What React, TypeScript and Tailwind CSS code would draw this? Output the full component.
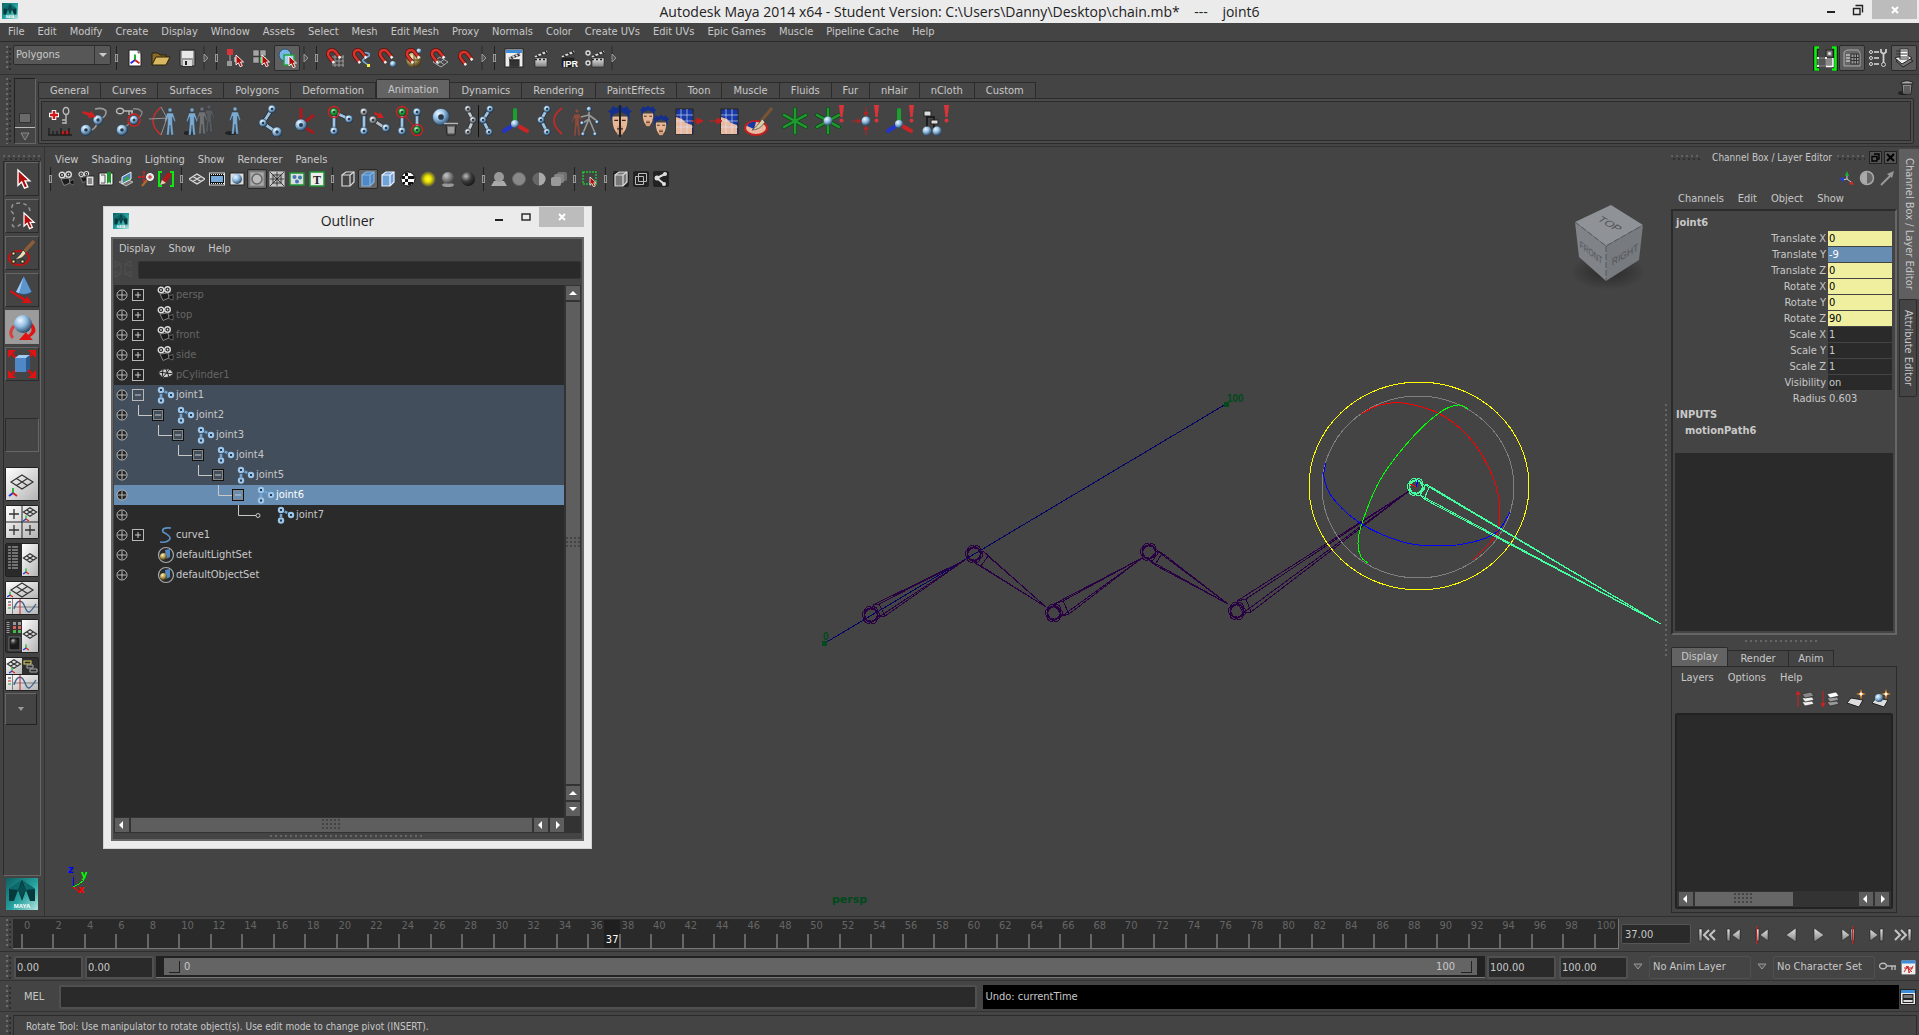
import React from "react";

/* ---------- shared drawing helpers ---------- */

interface ArtProps {
  w?: number;
  h?: number;
  children?: React.ReactNode;
}

const Art: React.FC<ArtProps> = ({ w = 20, h = w, children }) => (
  <svg width={w} height={h} viewBox={`0 0 ${w} ${h}`} className="block shrink-0" aria-hidden="true">
    {children}
  </svg>
);

const Defs = () => (
  <svg width="0" height="0" className="absolute" aria-hidden="true">
    <defs>
      <radialGradient id="ball" cx="35%" cy="30%" r="75%">
        <stop offset="0" stopColor="#eef8ff" />
        <stop offset="0.45" stopColor="#93bfe4" />
        <stop offset="1" stopColor="#23405e" />
      </radialGradient>
      <radialGradient id="grayBall" cx="35%" cy="30%" r="75%">
        <stop offset="0" stopColor="#ffffff" />
        <stop offset="0.5" stopColor="#9a9a9a" />
        <stop offset="1" stopColor="#3a3a3a" />
      </radialGradient>
      <radialGradient id="darkBall" cx="35%" cy="30%" r="75%">
        <stop offset="0" stopColor="#bbbbbb" />
        <stop offset="0.5" stopColor="#3c3c3c" />
        <stop offset="1" stopColor="#151515" />
      </radialGradient>
      <radialGradient id="greenBall" cx="40%" cy="35%" r="70%">
        <stop offset="0" stopColor="#ffffff" />
        <stop offset="0.4" stopColor="#27b43a" />
        <stop offset="1" stopColor="#0b5a17" />
      </radialGradient>
      <radialGradient id="goldBall" cx="35%" cy="30%" r="75%">
        <stop offset="0" stopColor="#fff3c0" />
        <stop offset="0.5" stopColor="#b39a50" />
        <stop offset="1" stopColor="#3a3014" />
      </radialGradient>
      <radialGradient id="glow">
        <stop offset="0" stopColor="#ffff30" />
        <stop offset="0.4" stopColor="#e8e000" />
        <stop offset="1" stopColor="#e8e000" stopOpacity="0" />
      </radialGradient>
      <radialGradient id="cubeShade">
        <stop offset="0" stopColor="#2a2a2a" />
        <stop offset="1" stopColor="#2a2a2a" stopOpacity="0" />
      </radialGradient>
      <linearGradient id="teal" x1="0" y1="0" x2="1" y2="1">
        <stop offset="0" stopColor="#0d5f63" />
        <stop offset="0.55" stopColor="#27a39f" />
        <stop offset="1" stopColor="#b4e6e2" />
      </linearGradient>
      <linearGradient id="tile" x1="0" y1="0" x2="1" y2="1">
        <stop offset="0" stopColor="#ffffff" />
        <stop offset="1" stopColor="#b4b4b4" />
      </linearGradient>
      <linearGradient id="steel" x1="0" y1="0" x2="0" y2="1">
        <stop offset="0" stopColor="#e6e6e6" />
        <stop offset="1" stopColor="#7f7f7f" />
      </linearGradient>
    </defs>
  </svg>
);

const Ball = ({ x, y, r = 4, f = "ball" }: { x: number; y: number; r?: number; f?: string }) => (
  <g>
    <circle cx={x} cy={y} r={r} fill={`url(#${f})`} stroke="#1f2f3f" strokeWidth="0.5" />
    {r >= 3 && <circle cx={x} cy={y} r={r / 3} fill="#26384a" />}
  </g>
);

const Link = ({ d, c = "#9fc4e2" }: { d: string; c?: string }) => (
  <g fill="none">
    <path d={d} stroke="#22303d" strokeWidth="4.4" />
    <path d={d} stroke={c} strokeWidth="2.8" />
  </g>
);

const Cursor = ({ x, y, s = 1 }: { x: number; y: number; s?: number }) => (
  <path
    transform={`translate(${x} ${y}) scale(${s})`}
    d="M0 0V11L2.6 8.6L4.6 13L7 12L5 7.8H8.4Z"
    fill="#b00d0d"
    stroke="#fff"
    strokeWidth="1"
  />
);

const Man = ({ x = 16, y = 0, c = "#7ba9d0" }: { x?: number; y?: number; c?: string }) => (
  <g transform={`translate(${x} ${y})`} fill={c} stroke="#2b3a49" strokeWidth="0.4">
    <circle cx="0" cy="4" r="2" />
    <path d="M-3 7H3L5.6 15L4.6 16L2.4 11V17L3.4 29H1L0 19L-1 29H-3.4L-2.4 17V11L-4.6 16L-5.6 15Z" />
  </g>
);

const Bang = () => (
  <g fill="#d9343a">
    <path d="M25 0H30L28.6 12H26.4Z" />
    <circle cx="27.5" cy="15.5" r="2" />
  </g>
);

const Face = ({ x, y, s = 1 }: { x: number; y: number; s?: number }) => (
  <g transform={`translate(${x} ${y}) scale(${s})`}>
    <path d="M-8 10Q-8 27 0 29Q8 27 8 10Z" fill="#e8b795" />
    <path d="M-3 20H3V29H-3Z" fill="#d79c78" />
    <path d="M-10 15L-10 6L-13 5L-9 2L-8-1L-4 1L0-2L4 1L8-1L9 2L13 5L10 6V15L7 8L0 5L-7 8Z" fill="#14308c" />
    <path d="M-6 14H-2M2 14H6M-3 23H3" stroke="#3a2418" strokeWidth="1.4" />
  </g>
);

const MeshFace = ({ x }: { x: number }) => (
  <g>
    <rect x={x} y="4" width="17" height="25" fill="#1839a5" stroke="#222" />
    <path d={`M${x} 12L${x + 6} 14L${x + 10} 18L${x + 16} 20V29H${x}Z`} fill="#e9b9a0" />
    <path
      d={`M${x} 10H${x + 17}M${x} 16H${x + 17}M${x} 22H${x + 17}M${x + 5} 4V29M${x + 11} 4V29`}
      stroke="#dfe6ff"
      strokeWidth="0.6"
    />
  </g>
);

const Key = ({ x, y, v = false }: { x: number; y: number; v?: boolean }) => (
  <g transform={`translate(${x} ${y}) rotate(${v ? 90 : 0})`} fill="none" stroke="#b9b9b9" strokeWidth="1.4">
    <ellipse cx="4" cy="0" rx="3.5" ry="2.8" />
    <path d="M8 0H17M13 0V4M16 0V4" />
  </g>
);

const Axis = ({ x, y, r = 1 }: { x: number; y: number; r?: number }) => (
  <g strokeWidth={1.8 * r} fill="none" transform={`translate(${x} ${y})`}>
    <path d={`M0 0V${-5 * r}`} stroke="#19b52b" />
    <path d={`M0 0L${-4 * r} ${3 * r}`} stroke="#2034d8" />
    <path d={`M0 0L${4 * r} ${3 * r}`} stroke="#d62020" />
  </g>
);

const Magnet = ({ x = 0, y = 0 }: { x?: number; y?: number }) => (
  <g transform={`translate(${x} ${y}) rotate(-38 7 6)`} fill="none">
    <path d="M3 13V6A4 4 0 0 1 11 6V13" stroke="#5a1010" strokeWidth="4" />
    <path d="M3 13V6A4 4 0 0 1 11 6V13" stroke="#d8342a" strokeWidth="2.6" />
    <path d="M3 12V14.500M11 12V14.500" stroke="#eee" strokeWidth="2.6" />
  </g>
);

const Clap = ({ x = 2, y = 2, c = "url(#steel)" }: { x?: number; y?: number; c?: string }) => (
  <g transform={`translate(${x} ${y})`}>
    <path d="M1 6L14 0L15 3L2 8Z" fill="#ddd" stroke="#222" strokeWidth="0.6" />
    <path d="M4 5L6 7M8 3L10 5M12 1L14 4" stroke="#222" strokeWidth="1.6" />
    <rect x="2" y="8" width="12" height="9" fill={c} stroke="#222" strokeWidth="0.6" />
    <path d="M2 9.500H14" stroke="#222" strokeWidth="1.6" strokeDasharray="2 2" />
  </g>
);

const MayaLogo = ({ s }: { s: number }) => (
  <svg width={s} height={s} viewBox="0 0 32 32" className="block shrink-0" aria-hidden="true">
    <rect width="32" height="32" fill="url(#teal)" />
    <path d="M3 23V11L16 2L29 11V23H24L20 12L16 23L12 12L8 23Z" fill="#06393c" />
    <path d="M16 2L29 11L20 12ZM16 2L3 11L12 12Z" fill="#0d6a6c" />
    <path d="M16 5L20 12L16 19L12 12Z" fill="#0a4d50" />
    <text x="16" y="30" textAnchor="middle" fontSize="6" fontWeight="bold" fill="#fff" fontFamily="Liberation Sans, sans-serif">
      MAYA
    </text>
  </svg>
);

const Grip = ({ vertical = true }: { vertical?: boolean }) => (
  <div
    className={
      vertical
        ? "w-1.5 self-stretch shrink-0 bg-[radial-gradient(circle_at_1px_1px,#6c6c6c_1px,transparent_1px),radial-gradient(circle_at_4px_3px,#2c2c2c_1px,transparent_1px)] bg-[length:6px_5px]"
        : "h-1.5 w-full bg-[radial-gradient(circle_at_1px_1px,#606060_1px,transparent_1px),radial-gradient(circle_at_3px_4px,#303030_1px,transparent_1px)] bg-[length:5px_6px]"
    }
  />
);

const Sep = () => (
  <div className="flex justify-center w-[11px] shrink-0">
    <Art w={5} h={24}>
      <path d="M2.5 0V9M2.5 15V24" stroke="#222" strokeWidth="1" />
      <rect x="1.5" y="8.5" width="2" height="7" fill="#444" stroke="#999" />
    </Art>
  </div>
);

const Tri = () => (
  <div className="flex justify-center w-[11px] shrink-0">
    <Art w={6} h={24}>
      <path d="M1 0V24" stroke="#2a2a2a" />
      <path d="M1 8L5 12L1 16Z" fill="#555" stroke="#999" />
    </Art>
  </div>
);

/* ---------- menus ---------- */

const mainMenu = [
  "File", "Edit", "Modify", "Create", "Display", "Window", "Assets", "Select", "Mesh", "Edit Mesh",
  "Proxy", "Normals", "Color", "Create UVs", "Edit UVs", "Epic Games", "Muscle", "Pipeline Cache", "Help",
];

const MenuItems = ({ items, className }: { items: string[]; className: string }) => (
  <nav className={`flex items-center whitespace-nowrap ${className}`}>
    {items.map((item) => (
      <button key={item} type="button">
        {item}
      </button>
    ))}
  </nav>
);

const TitleBar = () => (
  <header className="relative flex h-[23px] shrink-0 items-start bg-[#ebebeb] text-[#222]">
    <div className="pl-0.5 pt-[3px]">
      <MayaLogo s={16} />
    </div>
    <h1 className="flex-1 whitespace-pre pr-[18px] text-center font-['Open_Sans',sans-serif] text-[14px] leading-[23px]">
      Autodesk Maya 2014 x64 - Student Version: C:\Users\Danny\Desktop\chain.mb*{"    "}---{"    "}joint6
    </h1>
    <div className="absolute right-0.5 top-0 flex h-[19px] items-center">
      <button type="button" aria-label="Minimize" className="flex w-[26px] justify-center">
        <Art w={10}>
          <path d="M1 7H9" stroke="#222" strokeWidth="2" />
        </Art>
      </button>
      <button type="button" aria-label="Restore" className="flex w-[28px] justify-center">
        <Art w={12}>
          <path d="M3.5 1.5H10.5V8.5M1 4.5H8V10.5H1.5V4" stroke="#222" strokeWidth="1.4" fill="none" />
        </Art>
      </button>
      <button type="button" aria-label="Close" className="flex h-[19px] w-[45px] items-center justify-center bg-[#bcbcbc]">
        <Art w={8}>
          <path d="M1 1L7 7M7 1L1 7" stroke="#fff" strokeWidth="2" />
        </Art>
      </button>
    </div>
  </header>
);

/* ---------- status line ---------- */

interface Tool {
  name: string;
  art: React.ReactNode;
  on?: boolean;
}

const fileTools: Tool[] = [
  {
    name: "New scene",
    art: (
      <Art>
        <path d="M4 2H13L16 5V18H4Z" fill="#fff" stroke="#222" />
        <path d="M13 2V5H16" fill="#bbb" stroke="#222" strokeWidth="0.6" />
        <Axis x={10} y={12} r={1.1} />
      </Art>
    ),
  },
  {
    name: "Open scene",
    art: (
      <Art>
        <path d="M1 17V5H7L9 7H15V10" fill="#8a6a28" stroke="#2a2108" />
        <path d="M1 17L5 9H19L15 17Z" fill="#d8b860" stroke="#2a2108" />
      </Art>
    ),
  },
  {
    name: "Save scene",
    art: (
      <Art>
        <rect x="3" y="2" width="15" height="16" rx="1" fill="#9a9a9a" stroke="#222" />
        <rect x="5" y="3" width="11" height="7" fill="#e8e8e8" />
        <rect x="6" y="12" width="9" height="6" fill="#ddd" />
        <rect x="8" y="13" width="2" height="4" fill="#222" />
      </Art>
    ),
  },
];

const selectTools: Tool[] = [
  {
    name: "Select by hierarchy",
    art: (
      <Art>
        <rect x="2" y="1" width="6" height="6" fill="#d8343a" />
        <path d="M5 7V15" stroke="#aaa" />
        <rect x="2" y="13" width="5" height="5" fill="#999" />
        <rect x="9" y="9" width="5" height="5" fill="#999" />
        <Cursor x={11} y={7} s={0.9} />
      </Art>
    ),
  },
  {
    name: "Select by object",
    art: (
      <Art>
        <path d="M2 2H8V8H2ZM9 2H15V8H9ZM2 9H8V15H2Z" fill="#a5a5a5" stroke="#333" strokeWidth="0.5" />
        <rect x="9" y="9" width="6" height="6" fill="#3ec44e" />
        <Cursor x={11} y={7} s={0.9} />
      </Art>
    ),
  },
  {
    name: "Select by component",
    on: true,
    art: (
      <Art>
        <circle cx="8" cy="7" r="6" fill="#79b6e8" stroke="#28506e" />
        <rect x="7" y="7" width="10" height="10" fill="#a5d4f7" stroke="#19a52b" strokeWidth="1.4" />
        <Cursor x={12} y={8} s={0.9} />
      </Art>
    ),
  },
];

const snapTools: Tool[] = [
  {
    name: "Snap to grids",
    art: (
      <Art>
        <path d="M7 9H19M7 13H19M7 17H19M10 7V19M14 7V19M18 7V19" stroke="#999" />
        <Magnet />
      </Art>
    ),
  },
  {
    name: "Snap to curves",
    art: (
      <Art>
        <path d="M11 5Q20 4 18 8Q9 12 13 14L17 17" fill="none" stroke="#7ab0dd" strokeWidth="1.5" />
        <rect x="16" y="16" width="3" height="3" fill="#ffef40" />
        <Magnet />
      </Art>
    ),
  },
  {
    name: "Snap to points",
    art: (
      <Art>
        <circle cx="16" cy="16" r="3" fill="url(#ball)" />
        <Magnet />
      </Art>
    ),
  },
  {
    name: "Snap to projected center",
    art: (
      <Art>
        <circle cx="11" cy="12" r="7.5" fill="url(#goldBall)" />
        <path d="M4 12H18M11 5V19" stroke="#333" strokeWidth="0.7" />
        <circle cx="16" cy="3" r="2.5" fill="url(#ball)" />
        <Magnet x={1} />
      </Art>
    ),
  },
  {
    name: "Snap to view planes",
    art: (
      <Art>
        <path d="M4 14L11 9L19 14L12 19ZM8 11.5L15 16.5M8 16.5L15 11.5" fill="none" stroke="#aaa" />
        <Magnet />
      </Art>
    ),
  },
  {
    name: "Make live",
    art: (
      <Art>
        <Magnet x={2} y={2} />
      </Art>
    ),
  },
];

const renderTools: Tool[] = [
  {
    name: "Render view",
    art: (
      <Art>
        <rect x="1" y="1" width="18" height="18" fill="#eee" stroke="#222" />
        <rect x="2" y="2" width="16" height="3" fill="#3c8cd8" />
        <g transform="translate(4 5) scale(0.8)">
          <Clap x={0} y={0} c="#333" />
        </g>
      </Art>
    ),
  },
  {
    name: "Render frame",
    art: (
      <Art>
        <Clap />
      </Art>
    ),
  },
  {
    name: "IPR render",
    art: (
      <Art>
        <Clap c="#222" />
        <text x="5" y="19" fontSize="9" fontWeight="bold" fill="#fff" fontFamily="Liberation Sans, sans-serif">
          IPR
        </text>
      </Art>
    ),
  },
  {
    name: "Render settings",
    art: (
      <Art>
        <Clap x={5} />
        <circle cx="3" cy="5" r="2" fill="none" stroke="#ddd" strokeWidth="1.4" />
        <circle cx="3" cy="15" r="2" fill="none" stroke="#ddd" strokeWidth="1.4" />
      </Art>
    ),
  },
];

const ToolButton = ({ tool, size }: { tool: Tool; size: string }) => (
  <button
    type="button"
    aria-label={tool.name}
    className={`flex shrink-0 items-center justify-center rounded-[2px] border ${size} ${
      tool.on ? "border-[#2a2a2a] bg-[#606060]" : "border-transparent"
    }`}
  >
    {tool.art}
  </button>
);

const StatusLine = () => (
  <div className="flex h-[33px] shrink-0 items-center border-b border-[#333] pl-1.5 pr-0.5">
    <div className="flex h-6">
      <Grip />
    </div>
    <div className="relative mb-1.5 ml-px">
      <select
        aria-label="Menu set"
        className="h-5 w-[98px] appearance-none rounded-[2px] border border-[#2b2b2b] bg-[#575757] pl-0.5 leading-[16px]"
      >
        <option>Polygons</option>
      </select>
      <div className="pointer-events-none absolute right-px top-px flex h-[18px] w-4 items-center justify-center border-l border-[#333]">
        <Art w={8}>
          <path d="M0 2H8L4 6Z" fill="#ccc" />
        </Art>
      </div>
    </div>
    <Sep />
    {fileTools.map((t) => <ToolButton key={t.name} tool={t} size="h-[26px] w-[26px]" />)}
    <Tri />
    <Sep />
    {selectTools.map((t) => <ToolButton key={t.name} tool={t} size="h-[26px] w-[26px]" />)}
    <Tri />
    <Sep />
    {snapTools.map((t) => <ToolButton key={t.name} tool={t} size="h-[26px] w-[26px]" />)}
    <Tri />
    <Sep />
    {renderTools.map((t) => <ToolButton key={t.name} tool={t} size="h-[26px] w-[27px]" />)}
    <Tri />
    <div className="flex-1" />
    <button type="button" aria-label="Toggle modeling toolkit" className="mr-px">
      <Art w={25}>
        <path d="M6 1.5H2.5V23.5H6M19 1.5H22.5V23.5H19" fill="none" stroke="#111" strokeWidth="4.5" />
        <path d="M6 1.5H2.5V23.5H6M19 1.5H22.5V23.5H19" fill="none" stroke="#0df20d" strokeWidth="2.6" />
        <rect x="13" y="4" width="7" height="7" fill="#777" stroke="#222" />
        <circle cx="16.5" cy="7.5" r="1.6" fill="#ddd" />
        <path d="M5 12H13V20H5Z" fill="#555" stroke="#888" />
        <path d="M13 12H20V20H13Z" fill="#8a8a8a" />
        <path d="M20 12V20.5H13" fill="none" stroke="#fff" strokeWidth="1.5" />
        <path d="M4 11h2v2h-2zM12 11h2v2h-2zM4 19h2v2h-2z" fill="#eee" />
      </Art>
    </button>
    <button
      type="button"
      aria-label="Attribute editor"
      className="flex h-[26px] w-[26px] items-center justify-center rounded-[2px] border border-[#2a2a2a] bg-[#5c5c5c]"
    >
      <Art>
        <path d="M2 4L5 2H16L18 5V18H2Z" fill="#666" stroke="#aaa" />
        <path d="M4 7H8M4 10H8M4 13H8" stroke="#eee" strokeWidth="1.2" />
        <rect x="9" y="6" width="8" height="10" fill="#999" stroke="#333" />
        <path d="M9 9.5H17M9 12.5H17M12 6V16M14.5 6V16" stroke="#333" />
      </Art>
    </button>
    <button type="button" aria-label="Tool settings" className="flex h-[26px] w-[26px] items-center justify-center">
      <Art>
        <path d="M6 4H11M6 10H11M6 16H11" stroke="#ddd" strokeWidth="1.4" />
        <circle cx="3" cy="4" r="1.5" fill="none" stroke="#ddd" />
        <circle cx="3" cy="10" r="1.5" fill="none" stroke="#ddd" />
        <circle cx="3" cy="16" r="1.5" fill="none" stroke="#ddd" />
        <path d="M13 1V4L15.5 6L18 4V1M15.5 6V15" fill="none" stroke="#ccc" strokeWidth="1.8" />
        <circle cx="15.5" cy="16.5" r="2" fill="none" stroke="#ccc" />
      </Art>
    </button>
    <button
      type="button"
      aria-label="Channel box"
      className="flex h-[26px] w-[26px] items-center justify-center rounded-[2px] border border-[#2a2a2a] bg-[#5c5c5c]"
    >
      <Art>
        <path d="M2 13L13 9L19 13L9 19Z" fill="#777" stroke="#222" />
        <path d="M1 10L12 6L18 10L8 16Z" fill="#eee" stroke="#222" />
        <rect x="6" y="1" width="8" height="10" fill="#fff" stroke="#333" />
        <path d="M2 3H13M2 6H13M4 9H13" stroke="#333" />
      </Art>
    </button>
  </div>
);

/* ---------- shelf ---------- */

const shelfTabs = [
  "General", "Curves", "Surfaces", "Polygons", "Deformation", "Animation", "Dynamics", "Rendering",
  "PaintEffects", "Toon", "Muscle", "Fluids", "Fur", "nHair", "nCloth", "Custom",
];

const Star = () => (
  <g strokeLinecap="round">
    <path d="M16 4V28M5 10L27 22M27 10L5 22" stroke="#0f4d17" strokeWidth="4" />
    <path d="M16 4V28M5 10L27 22M27 10L5 22" stroke="#1f9a30" strokeWidth="2.4" />
  </g>
);

const Tripod = ({ x = 16 }: { x?: number }) => (
  <g strokeWidth="4" strokeLinecap="round" transform={`translate(${x} 19)`}>
    <path d="M0 0V-14" stroke="#1aa02c" />
    <path d="M0 0L-11 7" stroke="#2433c8" />
    <path d="M0 0L12 7" stroke="#cc2424" />
    <circle r="4" fill="url(#ball)" />
  </g>
);

const shelfTools: Tool[] = [
  {
    name: "Set key",
    art: (
      <>
        <path d="M10 5V15M5 10H15" stroke="#fff" strokeWidth="4.5" />
        <path d="M10 6V14M6 10H14" stroke="#d01a1a" strokeWidth="2.5" />
        <Key x={22} y={2} v />
        <rect x="17" y="26" width="9" height="4" fill="#c01c1c" />
        <path d="M4 30H28M5 30V23M9 30V26M13 30V26M17 30V23M21 30V26M25 30V23" stroke="#1d1d1d" strokeWidth="1.3" />
      </>
    ),
  },
  {
    name: "Motion path",
    art: (
      <>
        <path d="M6 26Q18 26 18 16Q28 12 27 6Q24 2 16 4" fill="none" stroke="#999" strokeWidth="1.6" />
        <Ball x={7} y={25} r={5.5} />
        <Ball x={19} y={15} r={5} />
        <path d="M4 6L11 8L12 6L17 12L9 13L10 11L3 8Z" fill="#d02020" />
      </>
    ),
  },
  {
    name: "Motion path key",
    art: (
      <>
        <Key x={2} y={6} />
        <path d="M7 26L18 16Q29 12 28 7Q25 3 19 4" fill="none" stroke="#888" strokeWidth="1.4" />
        <Ball x={8} y={25} r={5.5} />
        <Ball x={20} y={15} r={4.5} />
        <circle cx="20" cy="15" r="6" fill="none" stroke="#d02020" strokeWidth="1.5" />
      </>
    ),
  },
  {
    name: "Attach to path",
    art: (
      <>
        <Man x={21} y={1} />
        <path d="M12 2Q-4 16 12 30" fill="none" stroke="#c03030" strokeWidth="1.6" />
        <path d="M12 2L18 13M12 30L18 13M0 14L19 13" stroke="#aaa" strokeWidth="0.8" />
      </>
    ),
  },
  {
    name: "Ghost selected",
    art: (
      <>
        <ellipse cx="5" cy="28" rx="6" ry="2" fill="#222" />
        <Man x={25} y={-2} c="#5a5a5a" />
        <Man x={18} y={0} c="#707070" />
        <Man x={8} y={1} />
      </>
    ),
  },
  {
    name: "Unghost",
    art: (
      <>
        <ellipse cx="12" cy="28" rx="6" ry="2" fill="#222" />
        <Man x={16} y={0} />
      </>
    ),
  },
  {
    name: "Joint tool",
    art: (
      <>
        <Link d="M18 4L9 18L22 27" />
        <Ball x={18} y={4} />
        <Ball x={9} y={18} />
        <Ball x={23} y={27} r={5} />
      </>
    ),
  },
  {
    name: "Orient joint",
    art: (
      <>
        <path d="M12 20V3M12 20L25 10M12 20L25 28" stroke="#aa1c1c" strokeWidth="3" />
        <Ball x={12} y={20} r={6} />
      </>
    ),
  },
  {
    name: "Insert joint",
    art: (
      <>
        <Link d="M10 25V7L25 14" />
        <Ball x={25} y={14} />
        <Ball x={10} y={26} />
        <Ball x={10} y={7} r={4} f="greenBall" />
        <circle cx="10" cy="7" r="5.5" fill="none" stroke="#d02020" strokeWidth="1.4" />
      </>
    ),
  },
  {
    name: "Reroot skeleton",
    art: (
      <>
        <Link d="M5 7V25" />
        <Link d="M14 15L26 23" c="#bbb" />
        <Ball x={5} y={7} f="grayBall" />
        <Ball x={5} y={26} />
        <Ball x={14} y={15} f="grayBall" />
        <Ball x={27} y={23} />
        <path d="M16 7L20 9L21 7L25 13L18 13L19 11L15 9Z" fill="#d02020" />
      </>
    ),
  },
  {
    name: "Connect joint",
    art: (
      <>
        <Link d="M8 7V25M23 7V25" />
        <path d="M8 7L23 25" stroke="#d02020" />
        <Ball x={23} y={7} />
        <Ball x={8} y={26} />
        <Ball x={8} y={7} f="greenBall" />
        <Ball x={23} y={25} f="greenBall" />
        <circle cx="8" cy="7" r="5.5" fill="none" stroke="#d02020" strokeWidth="1.4" />
        <circle cx="23" cy="25" r="5.5" fill="none" stroke="#d02020" strokeWidth="1.4" />
      </>
    ),
  },
  {
    name: "Remove joint",
    art: (
      <>
        <Ball x={12} y={12} r={8.5} />
        <path d="M17 20H27L26 30H18Z" fill="#6f6f6f" stroke="#222" />
        <path d="M15 18.5H29M20 22V28M22 22V28M24 22V28" stroke="#b5b5b5" strokeWidth="1.3" />
      </>
    ),
  },
  {
    name: "Mirror joint",
    art: (
      <>
        <Link d="M3 4L9 15L4 27" c="#c8c8c8" />
        <Ball x={4} y={4} r={3.5} f="grayBall" />
        <Ball x={9} y={15} r={3.5} f="grayBall" />
        <Ball x={4} y={27} r={3.5} f="grayBall" />
        <path d="M14.5 0V32" stroke="#111" />
        <Link d="M26 4L19 15L25 27" />
        <Ball x={26} y={4} r={3.5} />
        <Ball x={19} y={15} r={3.5} />
        <Ball x={25} y={27} r={3.5} />
      </>
    ),
  },
  { name: "Orient axes", art: <Tripod /> },
  {
    name: "IK handle",
    art: (
      <>
        <Link d="M13 4L7 15L13 27" />
        <Ball x={13} y={4} r={3.5} />
        <Ball x={7} y={15} r={3.5} />
        <Ball x={13} y={27} r={3.5} />
        <path d="M28 3Q12 15 28 29" fill="none" stroke="#c22a2a" strokeWidth="1.8" />
      </>
    ),
  },
  {
    name: "Human IK",
    art: (
      <>
        <Man x={8} y={2} c="#8a4a3a" />
        <path d="M20 4V14L14 18M20 10L28 16M20 14L14 28M20 14L26 28M12 12L20 10" fill="none" stroke="#999" strokeWidth="1.6" />
        <Ball x={20} y={4} r={2.5} />
        <Ball x={28} y={17} r={2} />
        <Ball x={13} y={18} r={2} />
        <Ball x={14} y={29} r={2} />
        <Ball x={26} y={29} r={2} />
      </>
    ),
  },
  {
    name: "Blend shape",
    art: (
      <>
        <Face x={16} y={2} s={0.95} />
        <path d="M16 0V32" stroke="#222" strokeWidth="2" />
      </>
    ),
  },
  {
    name: "Blend target",
    art: (
      <>
        <Face x={9} y={2} s={0.66} />
        <Face x={22} y={11} s={0.66} />
      </>
    ),
  },
  {
    name: "Export weights",
    art: (
      <>
        <MeshFace x={2} />
        <path d="M17 16H24M23 13L29 16L23 19Z" fill="#c81d1d" stroke="#c81d1d" />
      </>
    ),
  },
  {
    name: "Import weights",
    art: (
      <>
        <MeshFace x={12} />
        <path d="M0 16H8M8 13L13 16L8 19Z" fill="#c81d1d" stroke="#c81d1d" />
      </>
    ),
  },
  {
    name: "Paint weights",
    art: (
      <>
        <ellipse cx="12" cy="23" rx="11" ry="7" fill="#e9b9a0" stroke="#c22020" strokeWidth="2" />
        <path d="M3 21Q6 16 12 17L10 24Z" fill="#1839a5" />
        <path d="M28 3L17 16" stroke="#7a5433" strokeWidth="3" />
        <path d="M18 14L21 17Q16 25 8 25Q14 21 18 14Z" fill="#d8cfa8" stroke="#333" strokeWidth="0.6" />
      </>
    ),
  },
  { name: "Locator", art: <Star /> },
  {
    name: "Parent constraint",
    art: (
      <>
        <g transform="translate(-2 0)">
          <Star />
          <circle cx="16" cy="16" r="4.5" fill="url(#ball)" />
        </g>
        <Bang />
      </>
    ),
  },
  {
    name: "Point constraint",
    art: (
      <>
        <path
          d="M17 2V10M15 7L17 11L19 7M17 30V22M15 25L17 21L19 25M3 16H10M8 14L12 16L8 18"
          stroke="#b52222"
          fill="#b52222"
        />
        <circle cx="17" cy="16" r="4.5" fill="url(#ball)" />
        <Bang />
      </>
    ),
  },
  {
    name: "Orient constraint",
    art: (
      <>
        <Tripod x={15} />
        <Bang />
      </>
    ),
  },
  {
    name: "Scale constraint",
    art: (
      <>
        <path d="M8 8V26M8 12H15V24" fill="none" stroke="#111" strokeWidth="1.5" />
        <rect x="5" y="6" width="7" height="5" fill="#ddd" stroke="#222" />
        <rect x="12" y="15" width="7" height="4" fill="#ddd" stroke="#222" />
        <circle cx="8" cy="26" r="4.5" fill="url(#ball)" />
        <circle cx="18" cy="26" r="4.5" fill="url(#ball)" />
        <Bang />
      </>
    ),
  },
];

const Trash = () => (
  <Art w={16}>
    <ellipse cx="5" cy="14" rx="5" ry="2" fill="#222" />
    <path d="M4 5H14L13 15H5Z" fill="#8a8a8a" stroke="#222" />
    <path d="M7 7V14M9 7V14M11 7V14" stroke="#333" />
    <path d="M3 3.5Q9 0 15 3.5V5H3Z" fill="#aaa" stroke="#222" />
  </Art>
);

const Shelf = () => (
  <div className="flex h-[72px] shrink-0 border-b border-[#333] pb-0.5 pl-1.5 pr-[5px] pt-[3px]">
    <Grip />
    <div className="ml-0.5 mr-0.5 flex w-[22px] flex-col items-center border border-[#222] border-b-[#666] border-r-[#666] pt-[34px]">
      <button type="button" aria-label="Shelf tabs" className="h-2.5 w-3 border border-[#333] bg-[#6a6a6a]" />
      <div className="mt-1 h-px w-full bg-[#bbb]" />
      <button type="button" aria-label="Shelf menu" className="mt-1">
        <Art w={10} h={9}>
          <path d="M1 1H9L5 8Z" fill="#555" stroke="#888" />
        </Art>
      </button>
    </div>
    <div className="flex min-w-0 flex-1 flex-col">
      <div className="flex h-5 items-end">
        {shelfTabs.map((tab) => (
          <button
            key={tab}
            type="button"
            className={
              tab === "Animation"
                ? "h-[19px] rounded-t-[2px] border border-b-0 border-[#2b2b2b] bg-[#636363] px-[11px] leading-[19px]"
                : "h-4 border border-b-0 border-l-0 border-[#2b2b2b] bg-[#474747] px-[11px] leading-4 first:border-l"
            }
          >
            {tab}
          </button>
        ))}
        <div className="flex-1" />
        <button type="button" aria-label="Delete shelf item" className="mb-[3px]">
          <Trash />
        </button>
      </div>
      <div className="flex-1 rounded-[2px] border border-[#2b2b2b] bg-[#4b4b4b] p-0.5">
        <div className="flex h-full items-center border border-[#2b2b2b] bg-[#444]">
          {shelfTools.map((t) => (
            <button key={t.name} type="button" aria-label={t.name} className="flex w-[35px] shrink-0 justify-center">
              <Art w={32}>{t.art}</Art>
            </button>
          ))}
        </div>
      </div>
    </div>
  </div>
);

/* ---------- tool box ---------- */

const toolBox: Tool[] = [
  {
    name: "Select tool",
    art: (
      <Art w={32}>
        <Cursor x={12} y={7} s={1.4} />
      </Art>
    ),
  },
  {
    name: "Lasso tool",
    art: (
      <Art w={32}>
        <path
          d="M6 8Q5 3 14 3Q23 4 24 11M5 11Q10 15 7 21Q5 27 9 27Q14 26 16 22"
          fill="none"
          stroke="#999"
          strokeWidth="1.4"
          strokeDasharray="4 3"
        />
        <Cursor x={18} y={13} s={1.2} />
      </Art>
    ),
  },
  {
    name: "Paint selection tool",
    art: (
      <Art w={32}>
        <ellipse cx="13" cy="21" rx="10" ry="7" fill="none" stroke="#c01414" strokeWidth="2.2" />
        <path d="M28 4L18 15" stroke="#8a5c38" strokeWidth="3.5" />
        <path d="M17 13L20 16Q16 23 9 22Q14 19 17 13Z" fill="#e6dfb8" stroke="#222" strokeWidth="0.7" />
        <path d="M6 15h3v3h-3zM6 23h3v3h-3zM15 23h3v3h-3z" fill="#fff6a0" stroke="#222" />
      </Art>
    ),
  },
  {
    name: "Move tool",
    art: (
      <Art w={32}>
        <path d="M18 2L10 18Q18 23 26 18Z" fill="#5c94cc" stroke="#24425f" strokeWidth="0.6" />
        <path d="M18 2L13 19L10 18Z" fill="#a5cbee" />
        <path d="M4 16L20 25L21 22L26 29L15 29L18 27L4 18Z" fill="#d81212" />
      </Art>
    ),
  },
  {
    name: "Rotate tool",
    on: true,
    art: (
      <Art w={32}>
        <path d="M8 15Q2 22 7 27" fill="none" stroke="#d84040" strokeWidth="3" />
        <path d="M26 12Q34 20 24 26L27 29L13 29L20 21L22 24Q28 20 24 15Z" fill="#e01212" />
        <circle cx="17" cy="13" r="9" fill="url(#ball)" />
      </Art>
    ),
  },
  {
    name: "Scale tool",
    art: (
      <Art w={32}>
        <path d="M4 4L28 28M28 4L4 28" stroke="#d01212" strokeWidth="2.5" />
        <path d="M2 2H10L2 10ZM30 2H22L30 10ZM2 30H10L2 22ZM30 30H22L30 22Z" fill="#e01212" />
        <path d="M9 10L13 7H24V20L20 24H9Z" fill="#4e88c6" />
        <path d="M9 10L13 7H24L20 10Z" fill="#a5cbee" />
        <path d="M20 10L24 7V20L20 24Z" fill="#2c5a8c" />
      </Art>
    ),
  },
];

const Plane = ({ x, y, s = 1 }: { x: number; y: number; s?: number }) => (
  <path
    transform={`translate(${x} ${y}) scale(${s})`}
    d="M-11 0L0-7L11 0L0 7ZM-5.5-3.5L5.5 3.5M5.5-3.5L-5.5 3.5"
    fill="none"
    stroke="#333"
    strokeWidth={1.2 / s}
  />
);

const Graph = ({ y }: { y: number }) => (
  <g>
    <rect x="0" y={y} width="32" height="15" fill="url(#tile)" />
    <path d={`M6.5 ${y}V${y + 15}M7 ${y + 8}H32`} stroke="#666" strokeWidth="0.8" />
    <path d={`M2 ${y + 3}H5`} stroke="#333" />
    <path d={`M2 ${y + 6}H5`} stroke="#d02020" />
    <path d={`M2 ${y + 9}H5`} stroke="#229a30" />
    <path
      d={`M8 ${y + 10}C11 ${y} 16 ${y} 19 ${y + 8}S24 ${y + 14} 30 ${y + 5}`}
      fill="none"
      stroke="#3a5f8c"
      strokeWidth="1.3"
    />
    <path d={`M14 ${y}V${y + 15}`} stroke="#d02020" />
  </g>
);

const layouts: Tool[] = [
  {
    name: "Single perspective view",
    art: (
      <Art w={32}>
        <rect width="32" height="32" fill="url(#tile)" />
        <Plane x={16} y={14} />
        <Axis x={7} y={25} />
      </Art>
    ),
  },
  {
    name: "Four view",
    art: (
      <Art w={32}>
        <rect width="32" height="32" fill="url(#tile)" />
        <path d="M8 3V13M3 8H13M8 19V29M3 24H13M24 19V29M19 24H29" stroke="#333" strokeWidth="1.3" />
        <path d="M16 0V32M0 16H32" stroke="#222" />
        <Plane x={24} y={6} s={0.6} />
        <Axis x={20} y={13} r={0.7} />
      </Art>
    ),
  },
  {
    name: "Outliner and perspective",
    art: (
      <Art w={32}>
        <rect width="16" height="32" fill="#2a2a2a" />
        <rect x="16" width="16" height="32" fill="url(#tile)" />
        <path
          d="M2 3H12M2 6H12M2 9H12M2 12H12M2 15H12M2 18H12M2 21H12M2 24H12"
          stroke="#bbb"
          strokeDasharray="3 1 6 2"
        />
        <Plane x={24} y={14} s={0.6} />
        <Axis x={20} y={28} r={0.7} />
      </Art>
    ),
  },
  {
    name: "Perspective and graph",
    art: (
      <Art w={32}>
        <rect width="32" height="16" fill="url(#tile)" />
        <Plane x={16} y={8} />
        <Axis x={4} y={13} r={0.7} />
        <path d="M0 16.5H32" stroke="#222" />
        <Graph y={17} />
      </Art>
    ),
  },
  {
    name: "Hypershade and perspective",
    art: (
      <Art w={32}>
        <rect width="16" height="32" fill="#333" />
        <rect x="16" width="16" height="32" fill="url(#tile)" />
        <path d="M2 2V14" stroke="#999" strokeWidth="3" strokeDasharray="1 1" />
        <path d="M7 2h3v3h-3zM12 2h3v3h-3z" fill="#999" />
        <path d="M7 6h3v3h-3zM12 6h3v3h-3z" fill="#d86060" />
        <path d="M7 10h3v3h-3zM12 10h3v3h-3z" fill="#45b845" />
        <rect x="3" y="17" width="11" height="13" fill="#1a1a1a" stroke="#888" strokeWidth="0.7" />
        <circle cx="8" cy="22" r="3.5" fill="url(#darkBall)" />
        <Plane x={24} y={14} s={0.6} />
        <Axis x={20} y={28} r={0.7} />
      </Art>
    ),
  },
  {
    name: "Perspective, hypergraph and graph",
    art: (
      <Art w={32}>
        <rect width="16" height="16" fill="url(#tile)" />
        <rect x="16" width="16" height="16" fill="#2f2f2f" />
        <Plane x={8} y={6} s={0.6} />
        <Axis x={6} y={13} r={0.7} />
        <rect x="18" y="3" width="7" height="3" fill="none" stroke="#e6d860" />
        <path d="M21 7H27V10H21ZM24 11H31V14H24Z" fill="none" stroke="#aaa" />
        <path d="M0 16.5H32" stroke="#222" />
        <Graph y={17} />
      </Art>
    ),
  },
];

const ToolBox = () => (
  <aside className="flex w-[45px] shrink-0 flex-col border-r border-[#333] pb-1.5 pl-[3px] pr-[3px] pt-2">
    <Grip vertical={false} />
    <div className="flex flex-1 flex-col border border-[#2b2b2b] border-b-[#666] border-r-[#666] pl-px">
      <div className="flex flex-col gap-[3px]">
        {toolBox.map((t) => (
          <button
            key={t.name}
            type="button"
            aria-label={t.name}
            className={`flex h-[34px] w-[34px] items-center justify-center border ${
              t.on ? "border-[#999] bg-[#9c9c9c]" : "border-[#666] border-b-[#2b2b2b] border-r-[#2b2b2b]"
            }`}
          >
            {t.art}
          </button>
        ))}
      </div>
      <button
        type="button"
        aria-label="Last used tool"
        className="mb-[15px] mt-[37px] h-[34px] w-[34px] border border-[#2b2b2b] border-b-[#666] border-r-[#666]"
      />
      <div className="flex flex-col gap-1">
        {layouts.map((t) => (
          <button key={t.name} type="button" aria-label={t.name} className="w-[34px] rounded-[2px] border border-[#222]">
            {t.art}
          </button>
        ))}
      </div>
      <button
        type="button"
        aria-label="More layouts"
        className="mt-0.5 flex h-8 w-8 items-center justify-center border border-[#666] border-b-[#222] border-r-[#222]"
      >
        <Art w={6} h={4}>
          <path d="M0 0H6L3 4Z" fill="#999" />
        </Art>
      </button>
    </div>
    <div className="ml-[3px] mt-0.5">
      <MayaLogo s={32} />
    </div>
  </aside>
);

/* ---------- outliner ---------- */

interface TreeNode {
  label: string;
  kind: "camera" | "mesh" | "joint" | "curve" | "set";
  level?: number;
  expander?: "plus" | "minus";
  dim?: boolean;
  state?: "selected" | "active";
}

const tree: TreeNode[] = [
  { label: "persp", kind: "camera", expander: "plus", dim: true },
  { label: "top", kind: "camera", expander: "plus", dim: true },
  { label: "front", kind: "camera", expander: "plus", dim: true },
  { label: "side", kind: "camera", expander: "plus", dim: true },
  { label: "pCylinder1", kind: "mesh", expander: "plus", dim: true },
  { label: "joint1", kind: "joint", expander: "minus", state: "selected" },
  { label: "joint2", kind: "joint", level: 1, expander: "minus", state: "selected" },
  { label: "joint3", kind: "joint", level: 2, expander: "minus", state: "selected" },
  { label: "joint4", kind: "joint", level: 3, expander: "minus", state: "selected" },
  { label: "joint5", kind: "joint", level: 4, expander: "minus", state: "selected" },
  { label: "joint6", kind: "joint", level: 5, expander: "minus", state: "active" },
  { label: "joint7", kind: "joint", level: 6 },
  { label: "curve1", kind: "curve", expander: "plus" },
  { label: "defaultLightSet", kind: "set" },
  { label: "defaultObjectSet", kind: "set" },
];

const Camera = () => (
  <g>
    <circle cx="4" cy="4" r="2.8" fill="#222" stroke="#ddd" strokeWidth="1.4" />
    <circle cx="10.5" cy="3.5" r="2.8" fill="#222" stroke="#ddd" strokeWidth="1.4" />
    <circle cx="4" cy="4" r="0.9" fill="#ddd" />
    <circle cx="10.5" cy="3.5" r="0.9" fill="#ddd" />
    <path d="M3 8L11 7L12 12L6 14.5Z" fill="#1c1c1c" stroke="#999" strokeWidth="0.8" />
    <path d="M12 10L16 8.5V14L12 12.5Z" fill="#111" stroke="#888" strokeWidth="0.6" />
  </g>
);

const nodeArt = {
  camera: <Camera />,
  mesh: (
    <g strokeWidth="1">
      <path d="M1 6L6 3L13 3L17 8L12 11L5 12Z" fill="#d0d0d0" stroke="#333" />
      <path d="M1 6L17 8M6 3L5 12M13 3L5 12M9 3L12 11" stroke="#222" fill="none" />
    </g>
  ),
  joint: (
    <g>
      <path d="M4 4V14M4 4L14 8.5" stroke="#6fa4d6" strokeWidth="2.6" strokeDasharray="3 1" />
      <circle cx="4" cy="4" r="3.2" fill="#9cc6ea" />
      <circle cx="4" cy="14.5" r="3.2" fill="#9cc6ea" />
      <circle cx="14" cy="9" r="3.2" fill="#9cc6ea" />
      <path d="M3 3h2v2h-2zM3 13.5h2v2h-2zM13 8h2v2h-2z" fill="#223850" />
    </g>
  ),
  curve: <path d="M14 2Q4 1 6 6Q14 10 13 13Q10 17 3 16" fill="none" stroke="#5c93c6" strokeWidth="1.6" />,
  set: (
    <g>
      <circle cx="9" cy="9" r="7.5" fill="#2a2a2a" stroke="#aaa" strokeWidth="1.2" />
      <path d="M8 4L13 3V11L9 13Z" fill="#4e88c6" />
      <circle cx="6.5" cy="10.5" r="3.5" fill="url(#goldBall)" />
    </g>
  ),
};

const TreeRow = ({ node }: { node: TreeNode }) => {
  const level = node.level ?? 0;
  const bg = node.state === "active" ? "bg-[#678db2]" : node.state === "selected" ? "bg-[#424e5c]" : "";
  const color = node.state === "active" ? "text-white" : node.dim ? "text-[#666]" : "text-[#c8c8c8]";
  return (
    <li className={`flex h-5 items-center pl-0.5 ${bg}`}>
      <Art w={12}>
        <circle cx="6" cy="6" r="5" fill="#222" stroke="#b8b8b8" />
        <path d="M6 2V10M2 6H10" stroke="#b8b8b8" />
      </Art>
      <div className="w-1 shrink-0" />
      {level > 0 && (
        <>
          <div className="shrink-0" style={{ width: (level - 1) * 20 }} />
          <Art w={20}>
            <path d="M6.5 0V10.5H20" fill="none" stroke="#c8c8c8" />
          </Art>
        </>
      )}
      <Art w={12}>
        {node.expander && (
          <>
            <rect
              x="0.5"
              y="0.5"
              width="11"
              height="11"
              fill={node.state ? "none" : "#222"}
              stroke={level > 0 ? "#111" : "#b8b8b8"}
            />
            {level > 0 && <rect x="1.5" y="1.5" width="9" height="9" fill="none" stroke="#888" />}
            <path d={node.expander === "plus" ? "M6 3V9M3 6H9" : "M3 6H9"} stroke="#c8c8c8" />
          </>
        )}
        {!node.expander && level > 0 && (
          <>
            <path d="M0 6.5H4" stroke="#c8c8c8" />
            <circle cx="6" cy="6.5" r="2" fill="none" stroke="#c8c8c8" />
          </>
        )}
      </Art>
      <div className="w-[13px] shrink-0" />
      <Art w={18}>{nodeArt[node.kind]}</Art>
      <button type="button" className={`ml-px ${color}`}>
        {node.label}
      </button>
    </li>
  );
};

const arrows = {
  up: "M1 5H9L5 1Z",
  down: "M1 1H9L5 5Z",
  left: "M6 1V9L2 5Z",
  right: "M4 1V9L8 5Z",
};

const ScrollButton = ({ dir }: { dir: keyof typeof arrows }) => (
  <button
    type="button"
    aria-label={`Scroll ${dir}`}
    className="flex h-3.5 w-3.5 shrink-0 items-center justify-center bg-[#5e5e5e]"
  >
    <Art w={10} h={dir === "up" || dir === "down" ? 6 : 10}>
      <path d={arrows[dir]} fill="#fff" />
    </Art>
  </button>
);

const ThumbDots = () => (
  <div className="h-3 w-5 bg-[radial-gradient(circle_at_1px_1px,#444_1px,transparent_1px)] bg-[length:4px_4px]" />
);

const Outliner = () => (
  <section className="absolute left-[58px] top-[59px] flex h-[643px] w-[489px] flex-col border border-[#d2d2d2] bg-[#ebebeb] px-[7px] pb-[7px]">
    <div className="relative flex h-[30px] shrink-0 items-start">
      <div className="pl-0.5 pt-1.5">
        <MayaLogo s={16} />
      </div>
      <h2 className="absolute inset-x-0 text-center font-['Open_Sans',sans-serif] text-[14px] leading-7 text-[#222]">
        Outliner
      </h2>
      <div className="absolute right-0 top-0 flex h-5 items-center">
        <button type="button" aria-label="Minimize outliner" className="flex w-[27px] justify-center">
          <Art w={10}>
            <path d="M1 8H9" stroke="#222" strokeWidth="2" />
          </Art>
        </button>
        <button type="button" aria-label="Maximize outliner" className="flex w-[27px] justify-center">
          <Art w={10}>
            <rect x="1" y="2" width="8" height="6" fill="none" stroke="#222" strokeWidth="1.4" />
          </Art>
        </button>
        <button
          type="button"
          aria-label="Close outliner"
          className="flex h-5 w-[45px] items-center justify-center bg-[#bcbcbc]"
        >
          <Art w={8}>
            <path d="M1 1L7 7M7 1L1 7" stroke="#fff" strokeWidth="2" />
          </Art>
        </button>
      </div>
    </div>
    <div className="flex min-h-0 flex-1 flex-col border-2 border-[#666] bg-[#444] px-px">
      <MenuItems items={["Display", "Show", "Help"]} className="h-5 gap-[13px] pl-[5px]" />
      <div className="flex h-[26px] items-start gap-1.5">
        <Art w={18}>
          <path
            d="M1 2L6 5L1 8ZM17 2L12 5L17 8ZM1 12L6 15L1 18ZM17 12L12 15L17 18ZM7 4V16M11 4V16"
            fill="none"
            stroke="#505050"
          />
        </Art>
        <input
          aria-label="Filter nodes"
          className="mt-0.5 h-[18px] min-w-0 flex-1 rounded-[2px] border border-[#333] bg-[#2a2a2a]"
        />
      </div>
      <div className="flex min-h-0 flex-1 bg-[#2a2a2a]">
        <ul className="min-w-0 flex-1">
          {tree.map((node) => (
            <TreeRow key={node.label} node={node} />
          ))}
        </ul>
        <div className="flex w-[17px] flex-col items-center gap-0.5 bg-[#333] py-px">
          <ScrollButton dir="up" />
          <div className="flex w-3.5 flex-1 items-center justify-center overflow-hidden bg-[#5e5e5e]">
            <ThumbDots />
          </div>
          <ScrollButton dir="up" />
          <ScrollButton dir="down" />
        </div>
      </div>
      <div className="flex h-4 items-center gap-0.5 bg-[#333] pl-px pr-[17px]">
        <ScrollButton dir="left" />
        <div className="flex h-3.5 flex-1 items-center justify-center bg-[#5e5e5e]">
          <ThumbDots />
        </div>
        <ScrollButton dir="left" />
        <ScrollButton dir="right" />
      </div>
      <div className="flex h-1.5 items-center justify-center">
        <div className="h-0.5 w-[155px] bg-[radial-gradient(circle_at_1px_1px,#666_1px,transparent_1px)] bg-[length:5px_5px]" />
      </div>
    </div>
  </section>
);

/* ---------- viewport ---------- */

const Cube = ({ fill = "none", line = "#ddd" }: { fill?: string; line?: string }) => (
  <g fill={fill} stroke={line} strokeWidth="1.2">
    <path d="M2 4L6 1H14V11L10 15H2Z" />
    <path d="M2 4H10V15M10 4L14 1" fill="none" />
  </g>
);

const panelGroups: Tool[][] = [
  [
    { name: "Select camera", art: <Camera /> },
    {
      name: "Camera attributes",
      art: (
        <>
          <g transform="scale(0.8)">
            <Camera />
          </g>
          <rect x="8" y="5" width="8" height="10" fill="#ddd" stroke="#222" />
          <path d="M10 8H14M10 10H14M10 12H14" stroke="#333" />
        </>
      ),
    },
    {
      name: "Bookmarks",
      art: (
        <>
          <path d="M1 2H15V14H1Z" fill="#eee" stroke="#222" />
          <path d="M3 4H7V12H3" fill="none" stroke="#555" />
          <path d="M9 1H13V13L11 11L9 13Z" fill="#1d9430" />
        </>
      ),
    },
    {
      name: "Image plane",
      art: (
        <>
          <path d="M1 11L8 15L15 11L8 8Z" fill="#777" stroke="#bbb" />
          <path d="M4 6L13 1V8L4 13Z" fill="#4a83c0" stroke="#eee" />
          <path d="M5 11L9 5L12 8Z" fill="#38a840" />
        </>
      ),
    },
    {
      name: "Pan and zoom",
      art: (
        <>
          <path d="M6 0V12M0 6H12" stroke="#c82222" strokeWidth="2" strokeDasharray="3 1" />
          <circle cx="12" cy="6" r="3.5" fill="#ddd" stroke="#fff" />
          <path d="M12 4V8M10 6H14" stroke="#c82222" />
          <path d="M9 9L4 15" stroke="#b06a30" strokeWidth="2" />
        </>
      ),
    },
    {
      name: "Grease pencil",
      art: (
        <>
          <path d="M4 1H1V15H4M12 1H15V15H12" fill="none" stroke="#12e612" strokeWidth="2" />
          <path d="M10 1L14 4L8 12L4 9Z" fill="#a81c1c" />
          <path d="M8 12L4 9L2 14Z" fill="#e0cfa8" />
        </>
      ),
    },
  ],
  [
    {
      name: "Grid",
      art: (
        <path
          d="M0 8L8 3L16 8L8 13ZM4 5.5L12 10.5M12 5.5L4 10.5"
          fill="#555"
          stroke="#ddd"
          strokeWidth="1.3"
        />
      ),
    },
    {
      name: "Film gate",
      art: (
        <>
          <rect x="0.5" y="2" width="15" height="12" fill="#111" stroke="#ddd" />
          <rect x="2" y="5" width="12" height="6" fill="#76a9d8" />
          <path d="M2 3.5H15M2 12.5H15" stroke="#eee" strokeDasharray="1 1" />
        </>
      ),
    },
    {
      name: "Resolution gate",
      art: (
        <>
          <rect x="1" y="2" width="14" height="12" fill="#ddd" stroke="#222" />
          <circle cx="8" cy="8" r="5" fill="url(#ball)" />
        </>
      ),
    },
    {
      name: "Gate mask",
      on: true,
      art: (
        <>
          <rect x="1" y="1" width="14" height="14" fill="#aaa" stroke="#888" />
          <circle cx="8" cy="8" r="5" fill="#bbb" stroke="#666" strokeWidth="1.5" />
        </>
      ),
    },
    {
      name: "Field chart",
      art: (
        <>
          <rect x="1" y="1" width="14" height="14" fill="#bbb" stroke="#ddd" />
          <path d="M1 1L15 15M15 1L1 15M8 1V15M1 8H15M4 4H12V12H4Z" fill="none" stroke="#222" strokeWidth="0.8" />
        </>
      ),
    },
    {
      name: "Safe action",
      art: (
        <>
          <rect x="1" y="2" width="14" height="12" fill="#ddd" stroke="#1d9430" strokeWidth="1.5" />
          <circle cx="5.5" cy="6" r="2" fill="#3c78b4" />
          <circle cx="11" cy="6.500" r="2" fill="#3c78b4" />
          <circle cx="8" cy="10.5" r="2" fill="#3c78b4" />
        </>
      ),
    },
    {
      name: "Safe title",
      art: (
        <>
          <rect x="1" y="1" width="14" height="14" fill="#eee" stroke="#1d9430" strokeWidth="1.5" />
          <text x="8" y="12.5" textAnchor="middle" fontSize="12" fontWeight="bold" fill="#222" fontFamily="Liberation Serif, serif">
            T
          </text>
        </>
      ),
    },
  ],
  [
    { name: "Wireframe", art: <Cube /> },
    { name: "Smooth shade", on: true, art: <Cube fill="#4e88c6" line="#86b4e0" /> },
    { name: "Wireframe on shaded", art: <Cube fill="#6fa2d6" line="#eef" /> },
    {
      name: "Textured",
      art: (
        <>
          <circle cx="8" cy="8" r="7" fill="#fff" />
          <path
            d="M5 2H8V5H5ZM11 5H14V8H11ZM2 5H5V8H2ZM5 8H8V11H5ZM8 5H11V8H8ZM8 5M11 11H13V13H11ZM3 11H5V13H3ZM8 11H11V14H8ZM11 8M8 8"
            fill="#111"
          />
          <circle cx="8" cy="8" r="7" fill="none" stroke="#111" />
        </>
      ),
    },
    { name: "Use all lights", art: <circle cx="8" cy="8" r="8" fill="url(#glow)" /> },
    {
      name: "Shadows",
      art: (
        <>
          <ellipse cx="8" cy="14" rx="6" ry="2" fill="#999" />
          <circle cx="8" cy="7" r="6" fill="url(#grayBall)" opacity="0.7" />
        </>
      ),
    },
    { name: "Ambient occlusion", art: <circle cx="8" cy="8" r="7" fill="url(#darkBall)" /> },
  ],
  [
    {
      name: "Motion blur",
      art: (
        <>
          <path d="M0 15L3 10H13L16 15Z" fill="#aaa" />
          <circle cx="8" cy="6" r="5" fill="#999" />
        </>
      ),
    },
    { name: "Multisample", art: <circle cx="8" cy="8" r="6.5" fill="#888" stroke="#666" /> },
    {
      name: "Depth of field",
      art: (
        <>
          <circle cx="8" cy="8" r="6.5" fill="#666" />
          <path d="M8 1.5A6.5 6.5 0 0 1 8 14.5Z" fill="#aaa" />
        </>
      ),
    },
    {
      name: "Depth peeling",
      art: (
        <>
          <rect x="6" y="1" width="10" height="9" rx="2" fill="#707070" />
          <rect x="3" y="3" width="10" height="9" rx="2" fill="#858585" />
          <rect x="0" y="6" width="10" height="9" rx="2" fill="#999" />
        </>
      ),
    },
  ],
  [
    {
      name: "Isolate select",
      art: (
        <>
          <rect x="1" y="1" width="13" height="12" fill="none" stroke="#22c033" strokeDasharray="2 1" strokeWidth="1.5" />
          <Cursor x={8} y={6} s={0.75} />
        </>
      ),
    },
  ],
  [
    {
      name: "X-ray",
      art: (
        <>
          <rect width="16" height="16" rx="2" fill="#222" />
          <Cube fill="#777" />
        </>
      ),
    },
    {
      name: "X-ray active",
      art: (
        <>
          <rect width="16" height="16" rx="2" fill="#222" />
          <path d="M2.5 5.5H10.5V13.5H2.5ZM5.5 2.5H13.5V10.5H5.5Z" fill="none" stroke="#bbb" />
        </>
      ),
    },
    {
      name: "X-ray joints",
      art: (
        <>
          <rect width="16" height="16" rx="2" fill="#222" />
          <path d="M12 3L4 7L11 13" fill="none" stroke="#ddd" strokeWidth="2" />
          <circle cx="12" cy="3" r="2" fill="#ddd" />
          <circle cx="4" cy="7" r="2.5" fill="#ddd" />
          <circle cx="11" cy="13" r="2" fill="#ddd" />
        </>
      ),
    },
  ],
];

type Point = [number, number];

// Catmull-Rom through the sampled points
const smooth = (pts: Point[]) => {
  let d = `M${pts[0][0]} ${pts[0][1]}`;
  for (let i = 0; i < pts.length - 1; i++) {
    const p0 = pts[i - 1] ?? pts[i];
    const p1 = pts[i];
    const p2 = pts[i + 1];
    const p3 = pts[i + 2] ?? p2;
    d += `C${p1[0] + (p2[0] - p0[0]) / 6} ${p1[1] + (p2[1] - p0[1]) / 6} ${p2[0] - (p3[0] - p1[0]) / 6} ${
      p2[1] - (p3[1] - p1[1]) / 6
    } ${p2[0]} ${p2[1]}`;
  }
  return d;
};

const redArc: Point[] = [
  [1361, 414], [1380, 405], [1403, 403], [1438, 413], [1467, 435], [1489, 468], [1499, 500], [1497, 533], [1473, 560],
];
const greenArc: Point[] = [
  [1468, 409], [1458, 405], [1439, 413], [1410, 440], [1380, 480], [1362, 523], [1358, 543], [1361, 557], [1368, 563],
];
const blueArc: Point[] = [
  [1326, 463], [1324, 477], [1332, 497], [1360, 523], [1403, 542], [1440, 546], [1473, 542], [1497, 532], [1510, 512],
];

const bones: { base: Point[]; tip: Point }[] = [
  { base: [[873, 605], [879, 604], [885, 616], [879, 617]], tip: [965, 560] },
  { base: [[975, 563], [981, 566], [988, 556], [983, 551]], tip: [1046, 607] },
  { base: [[1054, 604], [1063, 601], [1069, 614], [1062, 616]], tip: [1142, 558] },
  { base: [[1149, 560], [1155, 565], [1162, 553], [1157, 551]], tip: [1228, 604] },
  { base: [[1237, 601], [1246, 599], [1251, 612], [1243, 613]], tip: [1409, 491] },
];

const JointBall = ({ x, y }: { x: number; y: number }) => (
  <g transform={`translate(${x} ${y})`}>
    <circle r="7" />
    <ellipse rx="9" ry="6" transform="rotate(5)" />
    <ellipse rx="9" ry="6" transform="rotate(65)" />
    <ellipse rx="9" ry="6" transform="rotate(125)" />
  </g>
);

const Scene = () => (
  <svg className="absolute inset-0 h-full w-full" aria-hidden="true">
    <g transform="translate(-45 -147)" fill="none" strokeWidth="1">
      <g shapeRendering="crispEdges">
        <path d="M825 643L1226 404" stroke="#000066" />
        <g stroke="#2a0045">
          {bones.map((b) => (
            <path
              key={b.tip[0]}
              d={`M${b.base.join("L")}Z${b.base.map((p) => `M${p.join(" ")}L${b.tip.join(" ")}`).join("")}`}
            />
          ))}
          <JointBall x={871} y={615} />
          <JointBall x={974} y={554} />
          <JointBall x={1054} y={613} />
          <JointBall x={1149} y={552} />
          <JointBall x={1237} y={611} />
        </g>
        <path d="M822 641h5v5h-5zM1224 402h5v5h-5z" fill="#004a1c" />
        <ellipse cx="1418" cy="487" rx="96" ry="91" stroke="#808080" />
        <ellipse cx="1419" cy="486" rx="110" ry="104" stroke="#ffff00" />
        <path d={smooth(redArc)} stroke="#ff0000" />
        <path d={smooth(greenArc)} stroke="#00ff00" />
        <path d={smooth(blueArc)} stroke="#0000ff" />
        <g stroke="#43ff9f">
          <path d="M1426 484L1661 624M1429 487L1661 624M1420 495L1661 624M1424 499L1661 624M1426 484L1429 488L1424 499L1420 495Z" />
          <JointBall x={1416} y={487} />
        </g>
        <path d="M1416 487L1410 484" stroke="#f00" />
        <path d="M1416 487L1418 480" stroke="#00f" />
      </g>
      <g fill="#004a1c" fontFamily="Liberation Sans, sans-serif" fontWeight="bold" fontSize="10">
        <text x="823" y="640">0</text>
        <text x="1227" y="402">100</text>
        <text x="832" y="903" fontSize="11" fontFamily="DejaVu Sans, sans-serif">persp</text>
      </g>

      {/* view cube */}
      <ellipse cx="1608" cy="272" rx="38" ry="18" fill="url(#cubeShade)" />
      <path d="M1611 205L1643 225L1606 246L1575 222Z" fill="#8f9297" />
      <path d="M1575 222L1606 246V281L1579 257Z" fill="#808388" />
      <path d="M1643 225L1606 246V281L1639 260Z" fill="#777a7f" />
      <path d="M1575 222L1606 246L1643 225M1606 246V281" stroke="#55585c" strokeDasharray="6 2" />
      <g fill="#50545a" fontFamily="Liberation Sans, sans-serif" fontSize="12" textAnchor="middle">
        <text transform="matrix(0.85 0.5 -0.7 0.5 1607 226)">TOP</text>
        <text transform="matrix(0.65 0.5 0 1 1591 256)" fontSize="10">FRONT</text>
        <text transform="matrix(0.85 -0.5 0 1 1625 258)" fontSize="10">RIGHT</text>
      </g>

      {/* axis */}
      <g shapeRendering="crispEdges">
        <path d="M73 887V877" stroke="#0000ff" />
        <path d="M73 887Q80 884 84 880" stroke="#00ff00" />
        <path d="M73 887L80 892" stroke="#ff0000" />
      </g>
      <g fontFamily="DejaVu Sans, sans-serif" fontWeight="bold" fontSize="10">
        <text x="68" y="873" fill="#0000ff">z</text>
        <text x="81" y="878" fill="#00ff00">y</text>
        <text x="78" y="893" fill="#ff0000">x</text>
      </g>
    </g>
  </svg>
);

const Viewport = () => (
  <main className="relative min-w-0 flex-1">
    <Scene />
    <MenuItems
      items={["View", "Shading", "Lighting", "Show", "Renderer", "Panels"]}
      className="relative h-6 gap-[13px] pl-2.5 pt-0.5"
    />
    <div className="relative flex h-[15px] items-center">
      {panelGroups.map((group) => (
        <React.Fragment key={group[0].name}>
          <Sep />
          {group.map((t) => (
            <button
              key={t.name}
              type="button"
              aria-label={t.name}
              className={`flex h-5 w-5 items-center justify-center rounded-[2px] border ${
                t.on ? "border-[#2a2a2a] bg-[#666]" : "border-transparent"
              }`}
            >
              <Art w={16}>{t.art}</Art>
            </button>
          ))}
        </React.Fragment>
      ))}
    </div>
    <Outliner />
  </main>
);

/* ---------- channel box ---------- */

const channels = [
  { name: "Translate X", value: "0", style: "bg-[#f0efa0] text-black" },
  { name: "Translate Y", value: "-9", style: "bg-[#678db2] text-white" },
  { name: "Translate Z", value: "0", style: "bg-[#f0efa0] text-black" },
  { name: "Rotate X", value: "0", style: "bg-[#f0efa0] text-black" },
  { name: "Rotate Y", value: "0", style: "bg-[#f0efa0] text-black" },
  { name: "Rotate Z", value: "90", style: "bg-[#f0efa0] text-black" },
  { name: "Scale X", value: "1", style: "bg-[#2a2a2a]" },
  { name: "Scale Y", value: "1", style: "bg-[#2a2a2a]" },
  { name: "Scale Z", value: "1", style: "bg-[#2a2a2a]" },
  { name: "Visibility", value: "on", style: "bg-[#2a2a2a]" },
  { name: "Radius", value: "0.603", style: "bg-transparent" },
];

const Sheets = ({ top, rest }: { top: string; rest: string }) => (
  <g stroke="#222" strokeWidth="0.6">
    <path d="M6 13L9 17L18 15L16 12Z" fill={rest} />
    <path d="M6 9L9 13L18 11L16 8Z" fill={rest} />
    <path d="M6 5L9 9L18 7L15 3Z" fill={top} />
  </g>
);

const Spark = () => (
  <g>
    <path d="M15 0L16 4L20 5L16 6L15 11L14 6L10 5L14 4Z" fill="#ff9a2a" />
    <circle cx="15" cy="5" r="1.5" fill="#fff" />
  </g>
);

const layerTools: Tool[] = [
  {
    name: "Move layer up",
    art: (
      <>
        <path d="M2 18V3M0 6L2 2L4 6" stroke="#d02020" fill="#d02020" />
        <Sheets top="#888" rest="#eee" />
      </>
    ),
  },
  {
    name: "Move layer down",
    art: (
      <>
        <path d="M2 2V17M0 14L2 18L4 14" stroke="#d02020" fill="#d02020" />
        <Sheets top="#fff" rest="#999" />
      </>
    ),
  },
  {
    name: "New empty layer",
    art: (
      <>
        <path d="M1 14L5 9L17 11L13 18Z" fill="#ddd" stroke="#222" />
        <Spark />
      </>
    ),
  },
  {
    name: "New layer from selected",
    art: (
      <>
        <path d="M1 14L5 9L17 11L13 18Z" fill="#ddd" stroke="#222" />
        <circle cx="8" cy="9" r="4" fill="url(#ball)" />
        <Spark />
      </>
    ),
  },
];

const ChannelBox = () => (
  <aside className="flex w-[226px] shrink-0 flex-col">
    <div className="flex h-[21px] items-center">
      <div className="w-[30px]">
        <Grip vertical={false} />
      </div>
      <h2 className="flex-1 whitespace-nowrap pl-1.5 text-center text-[10px]">Channel Box / Layer Editor</h2>
      <div className="mr-1 w-7">
        <Grip vertical={false} />
      </div>
      <button
        type="button"
        aria-label="Float panel"
        className="mr-0.5 flex h-[13px] w-[13px] items-center justify-center border border-[#222] bg-[#555]"
      >
        <Art w={9}>
          <path d="M3 1H8V6H6M1 3.5H6V8H1Z" fill="none" stroke="#000" strokeWidth="1.4" />
        </Art>
      </button>
      <button
        type="button"
        aria-label="Close panel"
        className="flex h-[13px] w-[13px] items-center justify-center border border-[#222] bg-[#555]"
      >
        <Art w={9}>
          <path d="M1 1L8 8M8 1L1 8" stroke="#000" strokeWidth="2" />
        </Art>
      </button>
    </div>
    <div className="flex h-5 items-center justify-end gap-1 pr-0.5">
      <Art w={16}>
        <path d="M8 9V4M8 9L3 10M8 9L12 12" stroke="#ccc" />
        <path d="M8 1L10 6H6Z" fill="#1fae30" />
        <path d="M0 9L5 7V12Z" fill="#2540cc" />
        <path d="M15 15L10 14L13 11Z" fill="#d82828" />
      </Art>
      <Art w={16}>
        <circle cx="8" cy="8" r="6.5" fill="#666" stroke="#aaa" strokeWidth="1.5" />
        <path d="M8 2A6 6 0 0 0 8 14Z" fill="#aaa" />
      </Art>
      <Art w={16}>
        <path d="M2 15L11 6" stroke="#999" strokeWidth="2" />
        <path d="M15 1L13 8L8 4Z" fill="#999" />
      </Art>
    </div>
    <MenuItems items={["Channels", "Edit", "Object", "Show"]} className="h-[21px] gap-3.5 pl-[7px] pt-px" />
    <div className="flex h-[426px] flex-col border-2 border-[#2b2b2b] border-b-[#666] border-r-[#666] p-0.5">
      <div className="min-h-[240px] shrink-0 leading-4">
        <p className="pl-px pt-[2px] font-bold">joint6</p>
        {channels.map((c) => (
          <div key={c.name} className="flex h-4 pr-px">
            <label htmlFor={c.name} className="flex-1 pr-0.5 text-right">
              {c.name}
            </label>
            <input id={c.name} defaultValue={c.value} className={`h-[15px] w-16 px-px ${c.style}`} />
          </div>
        ))}
        <p className="pl-px font-bold">INPUTS</p>
        <p className="pl-2.5 font-bold">motionPath6</p>
      </div>
      <div className="flex-1 bg-[#2a2a2a]" />
    </div>
    <div className="flex h-[11px] items-center justify-center pr-1">
      <div className="h-0.5 w-[74px] bg-[radial-gradient(circle_at_1px_1px,#666_1px,transparent_1px)] bg-[length:5px_5px]" />
    </div>
    <div className="flex h-5 shrink-0 items-end">
      <button
        type="button"
        className="h-[19px] w-[57px] rounded-t-[2px] border border-b-0 border-[#2b2b2b] bg-[#636363]"
      >
        Display
      </button>
      <button type="button" className="h-4 w-[61px] border border-b-0 border-l-0 border-[#2b2b2b] leading-4">
        Render
      </button>
      <button type="button" className="h-4 w-[45px] border border-b-0 border-l-0 border-[#2b2b2b] leading-4">
        Anim
      </button>
    </div>
    <div className="mb-[3px] flex min-h-0 flex-1 flex-col border border-[#2b2b2b] px-[3px] pb-[3px]">
      <MenuItems items={["Layers", "Options", "Help"]} className="h-[22px] gap-3.5 pl-1.5" />
      <div className="flex h-6 items-start justify-end gap-[5px] pr-0.5">
        {layerTools.map((t) => (
          <button key={t.name} type="button" aria-label={t.name}>
            <Art>{t.art}</Art>
          </button>
        ))}
      </div>
      <div className="flex flex-1 flex-col justify-end rounded-[2px] border-2 border-[#222] bg-[#2a2a2a]">
        <div className="flex h-4 items-center gap-0.5 bg-[#333] px-0.5">
          <ScrollButton dir="left" />
          <div className="flex h-3.5 w-[98px] items-center justify-center bg-[#666]">
            <ThumbDots />
          </div>
          <div className="flex-1" />
          <ScrollButton dir="left" />
          <ScrollButton dir="right" />
        </div>
      </div>
    </div>
  </aside>
);

const SideTabs = () => (
  <div className="ml-0.5 flex w-5 shrink-0 flex-col pt-0.5">
    <button
      type="button"
      className="flex h-[150px] w-5 items-center justify-center bg-[#5f5f5f] [writing-mode:vertical-rl]"
    >
      Channel Box / Layer Editor
    </button>
    <button
      type="button"
      className="flex h-[98px] w-[18px] items-center justify-center rounded-r-[2px] border border-[#2b2b2b] [writing-mode:vertical-rl]"
    >
      Attribute Editor
    </button>
  </div>
);

/* ---------- time controls ---------- */

const frames = Array.from({ length: 51 }, (_, i) => i * 2);

const Back = () => <path d="M15 4L7 10L15 16Z" fill="url(#steel)" stroke="#222" strokeWidth="0.6" />;
const Forward = () => <path d="M5 4L13 10L5 16Z" fill="url(#steel)" stroke="#222" strokeWidth="0.6" />;
const Bar = ({ x }: { x: number }) => (
  <rect x={x} y="4" width="3" height="12" fill="url(#steel)" stroke="#222" strokeWidth="0.6" />
);

const transport: Tool[] = [
  {
    name: "Go to start",
    art: (
      <>
        <Bar x={1} />
        <path d="M11 5L6 10L11 15M17 5L12 10L17 15" fill="none" stroke="#c4c4c4" strokeWidth="2" />
      </>
    ),
  },
  {
    name: "Step back one frame",
    art: (
      <>
        <Bar x={2} />
        <Back />
      </>
    ),
  },
  {
    name: "Step back one key",
    art: (
      <>
        <Bar x={3} />
        <Back />
        <path d="M3.5 1V19" stroke="#e01818" />
      </>
    ),
  },
  { name: "Play backwards", art: <path d="M15 3L5 10L15 17Z" fill="url(#steel)" stroke="#222" strokeWidth="0.6" /> },
  { name: "Play forwards", art: <path d="M5 3L15 10L5 17Z" fill="url(#steel)" stroke="#222" strokeWidth="0.6" /> },
  {
    name: "Step forward one key",
    art: (
      <>
        <Bar x={14} />
        <Forward />
        <path d="M15.5 1V19" stroke="#e01818" />
      </>
    ),
  },
  {
    name: "Step forward one frame",
    art: (
      <>
        <Bar x={15} />
        <Forward />
      </>
    ),
  },
  {
    name: "Go to end",
    art: (
      <>
        <Bar x={16} />
        <path d="M3 5L8 10L3 15M9 5L14 10L9 15" fill="none" stroke="#c4c4c4" strokeWidth="2" />
      </>
    ),
  },
];

const TimeSlider = () => (
  <div className="flex h-9 shrink-0 border-b border-t border-[#2f2f2f] pl-1.5">
    <div className="flex py-0.5">
      <Grip />
    </div>
    <div className="my-0.5 ml-px flex min-w-0 flex-1 border-b border-r border-[#777] bg-[#2a2a2a] pl-2">
      {frames.map((f) => (
        <div key={f} className={`relative flex flex-col justify-between ${f === 100 ? "w-6" : "flex-1"}`}>
          <span className="pl-[3px] leading-[13px] text-[#666]">{f}</span>
          <span className="h-3.5 w-0.5 bg-[#666]" />
          {f === 36 && (
            <div className="absolute left-[17px] top-px flex h-7 w-4 items-end justify-center bg-[#1f1f1f] text-white">
              <span className="leading-4">37</span>
            </div>
          )}
        </div>
      ))}
    </div>
    <div className="flex w-[300px] shrink-0 items-center pl-0.5">
      <input
        aria-label="Current time"
        defaultValue="37.00"
        className="h-5 w-[70px] rounded-[2px] border border-[#555] bg-[#2a2a2a] px-[3px]"
      />
      <div className="ml-[3px] flex flex-1 justify-between pr-[3px] pt-0.5">
        {transport.map((t) => (
          <button key={t.name} type="button" aria-label={t.name} className="flex w-[27px] justify-center">
            <Art>{t.art}</Art>
          </button>
        ))}
      </div>
    </div>
  </div>
);

const RangeField = ({ label, value }: { label: string; value: string }) => (
  <input
    aria-label={label}
    defaultValue={value}
    className="h-[23px] w-[69px] shrink-0 rounded-[2px] border-2 border-[#505050] bg-[#2a2a2a] px-px"
  />
);

const DropMark = () => (
  <Art w={12} h={8}>
    <path d="M2 1H10L6 6Z" fill="#555" stroke="#999" />
  </Art>
);

const RangeSlider = () => (
  <div className="flex h-[29px] shrink-0 items-center border-b border-[#333] pl-1.5 pr-[3px] pt-0.5">
    <div className="flex h-6">
      <Grip />
    </div>
    <div className="ml-0.5 flex gap-0.5">
      <RangeField label="Animation start" value="0.00" />
      <RangeField label="Playback start" value="0.00" />
    </div>
    <div className="mx-0.5 flex h-[22px] min-w-0 flex-1 items-center border-b border-[#777] bg-[#222] px-2">
      <div className="flex h-[17px] flex-1 items-center justify-between bg-[#646464] px-[5px]">
        <div className="flex items-center gap-1">
          <button type="button" aria-label="Range start" className="h-3 w-[11px] border-b border-r border-[#222]" />
          <span>0</span>
        </div>
        <div className="flex items-center gap-1.5">
          <span>100</span>
          <button type="button" aria-label="Range end" className="h-3 w-[11px] border-b border-r border-[#222]" />
        </div>
      </div>
    </div>
    <div className="flex items-center gap-[3px]">
      <RangeField label="Playback end" value="100.00" />
      <RangeField label="Animation end" value="100.00" />
    </div>
    <div className="ml-1 flex items-center gap-[5px]">
      <DropMark />
      <button type="button" className="h-[23px] w-[102px] rounded-[2px] border border-[#505050] pl-[3px] text-left">
        No Anim Layer
      </button>
      <DropMark />
      <button
        type="button"
        className="h-[23px] w-[102px] whitespace-nowrap rounded-[2px] border border-[#505050] pl-[3px] text-left"
      >
        No Character Set
      </button>
    </div>
    <button type="button" aria-label="Auto keyframe" className="ml-1">
      <Art w={18} h={12}>
        <Key x={0} y={5} />
      </Art>
    </button>
    <button type="button" aria-label="Animation preferences" className="ml-1">
      <Art w={15}>
        <rect width="15" height="15" fill="#eee" stroke="#222" />
        <rect x="0.5" y="0.5" width="14" height="3" fill="#3c8cd8" />
        <path d="M3 12L7 6L8 13L12 6M3 8H12M5 6L11 12" fill="none" stroke="#cc2525" />
      </Art>
    </button>
  </div>
);

const CommandLine = () => (
  <div className="flex h-[31px] shrink-0 items-center border-b border-[#333] pl-1.5 pr-[3px] pt-0.5">
    <div className="flex h-6">
      <Grip />
    </div>
    <label htmlFor="mel" className="w-[47px] pl-3">
      MEL
    </label>
    <input id="mel" className="h-6 min-w-0 flex-1 rounded-[2px] border-2 border-[#505050] bg-[#2a2a2a]" />
    <output className="ml-1.5 mr-px h-6 min-w-0 flex-1 bg-black pl-[3px] leading-6">Undo: currentTime</output>
    <button type="button" aria-label="Script editor">
      <Art w={16}>
        <rect x="0.5" y="0.5" width="15" height="15" fill="#eee" stroke="#222" />
        <rect x="1" y="1" width="14" height="3" fill="#3c8cd8" />
        <rect x="3" y="5.5" width="10" height="4" fill="#777" stroke="#222" />
        <rect x="3" y="10.5" width="10" height="3" fill="#ddd" stroke="#222" />
      </Art>
    </button>
  </div>
);

const HelpLine = () => (
  <footer className="flex h-[23px] shrink-0 pl-1.5 pr-0.5 pt-[3px]">
    <Grip />
    <p className="ml-px flex-1 border-l border-r border-t border-[#2b2b2b] pl-3 text-[10px] leading-[22px]">
      Rotate Tool: Use manipulator to rotate object(s). Use edit mode to change pivot (INSERT).
    </p>
  </footer>
);

export default function App() {
  return (
    <div className="flex h-screen flex-col overflow-hidden bg-[#444] font-['DejaVu_Sans_Condensed','DejaVu_Sans',sans-serif] text-[11px] leading-4 text-[#c8c8c8]">
      <Defs />
      <TitleBar />
      <MenuItems items={mainMenu} className="h-[19px] shrink-0 gap-[13px] border-b border-[#2b2b2b] pl-2" />
      <StatusLine />
      <Shelf />
      <div className="flex min-h-0 flex-1">
        <ToolBox />
        <Viewport />
        <div className="flex w-2.5 shrink-0 items-center justify-center">
          <div className="h-[255px] w-0.5 bg-[radial-gradient(circle_at_1px_1px,#666_1px,transparent_1px)] bg-[length:5px_5px]" />
        </div>
        <ChannelBox />
        <SideTabs />
      </div>
      <TimeSlider />
      <RangeSlider />
      <CommandLine />
      <HelpLine />
    </div>
  );
}
